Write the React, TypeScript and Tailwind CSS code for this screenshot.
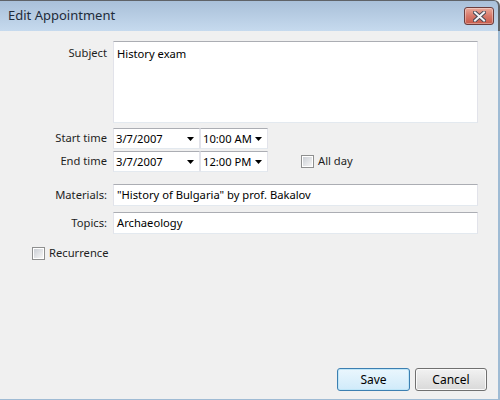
import React from "react";

const FONT = "font-['Noto_Sans','Open_Sans',sans-serif]";

// Win7-ish textbox: darker top edge, pale sides and bottom.
const BOX = "border border-[#e2e3ea] border-t-[#abadb3] border-b-[#e3e9ef] bg-white";
const TXT = "text-[11.2px]";

function Caret() {
  return (
    <svg width="7" height="4" viewBox="0 0 7 4" className="shrink-0">
      <path d="M0 0h7L3.5 4z" fill="#000" />
    </svg>
  );
}

function Dropdown({ value, width }: { value: string; width: string }) {
  return (
    <div className={`${BOX} ${width} ${TXT} flex h-[21px] items-center justify-between whitespace-nowrap pl-[2px] pr-[5px] text-black`}>
      <span className="leading-none">{value}</span>
      <Caret />
    </div>
  );
}

function CheckBox() {
  return (
    <span className="flex h-[13px] w-[13px] shrink-0 items-center justify-center border border-[#8e8f8f] bg-white">
      <span className="h-[9px] w-[9px] bg-gradient-to-br from-[#cbcfd5] to-[#f6f6f6]" />
    </span>
  );
}

function CloseButton() {
  return (
    <div className="flex h-[18px] w-[30px] items-center justify-center rounded-[3px] border border-[#6b3e3e] bg-gradient-to-b from-[#e9a99a] via-[#d7786a] to-[#c65a4a] shadow-[inset_0_0_0_1px_rgba(255,255,255,0.35)]">
      <svg width="13" height="11" viewBox="0 0 13 11">
        <path d="M2 1.5l9 8M11 1.5l-9 8" stroke="#4a4a55" strokeWidth="4" strokeLinecap="square" />
        <path d="M2 1.5l9 8M11 1.5l-9 8" stroke="#f4f4f8" strokeWidth="2" strokeLinecap="square" />
      </svg>
    </div>
  );
}

function Label({ children, className = "" }: { children: React.ReactNode; className?: string }) {
  return <div className={`text-right ${TXT} text-[#1e1e1e] ${className}`}>{children}</div>;
}

export default function App() {
  return (
    <div className={`${FONT} relative flex h-[400px] w-[500px] flex-col overflow-hidden bg-[#f0f0f0]`}>
      {/* title bar */}
      <div className="flex h-[31px] shrink-0 items-center justify-between rounded-tr-[6px] border-t border-r-2 border-[#5f6368] bg-gradient-to-b from-[#a9c0d9] to-[#c6daee] pl-[8px] pr-[4px]">
        <span className="text-[13px] text-[#1e2b3a]">Edit Appointment</span>
        <CloseButton />
      </div>

      <div className="flex flex-1 flex-col border-r-2 border-b border-[#9fbbd4] pb-[8px]">
        <div className="grid grid-cols-[107px_365px] gap-x-[6px] pt-[10px]">
          <Label className="pt-[4px]">Subject</Label>
          <div className={`${BOX} ${TXT} h-[82px] px-[3px] pt-[4px] text-black`}>History exam</div>

          <Label className="mt-[5px] flex h-[21px] items-center justify-end">Start time</Label>
          <div className="mt-[5px] flex">
            <Dropdown value="3/7/2007" width="w-[87px]" />
            <Dropdown value="10:00 AM" width="w-[68px]" />
          </div>

          <Label className="mt-[2px] flex h-[21px] items-center justify-end">End time</Label>
          <div className="mt-[2px] flex items-center">
            <Dropdown value="3/7/2007" width="w-[87px]" />
            <Dropdown value="12:00 PM" width="w-[68px]" />
            <label className={`ml-[33px] flex items-center gap-[4px] ${TXT} text-[#1e1e1e]`}>
              <CheckBox />
              All day
            </label>
          </div>

          <Label className="mt-[12px] flex h-[22px] items-center justify-end">Materials:</Label>
          <div className={`${BOX} ${TXT} mt-[12px] flex h-[22px] items-center px-[3px] text-black`}>
            "History of Bulgaria" by prof. Bakalov
          </div>

          <Label className="mt-[6px] flex h-[22px] items-center justify-end">Topics:</Label>
          <div className={`${BOX} ${TXT} mt-[6px] flex h-[22px] items-center px-[3px] text-black`}>Archaeology</div>
        </div>

        <label className={`ml-[32px] mt-[12px] flex h-[15px] items-center gap-[4px] ${TXT} text-[#1e1e1e]`}>
          <CheckBox />
          Recurrence
        </label>

        <div className="mt-auto flex justify-end gap-[5px] pr-[11px]">
          <button className="h-[23px] w-[73px] rounded-[3px] border border-[#3c7fb1] bg-gradient-to-b from-[#eaf6fd] to-[#d0ebfa] text-[12px] text-black shadow-[inset_0_0_0_1px_#bfe6f8]">
            Save
          </button>
          <button className="h-[23px] w-[72px] rounded-[3px] border border-[#707070] bg-gradient-to-b from-[#f2f2f2] to-[#d9d9d9] text-[12px] text-black shadow-[inset_0_0_0_1px_#fafafa]">
            Cancel
          </button>
        </div>
      </div>
    </div>
  );
}
